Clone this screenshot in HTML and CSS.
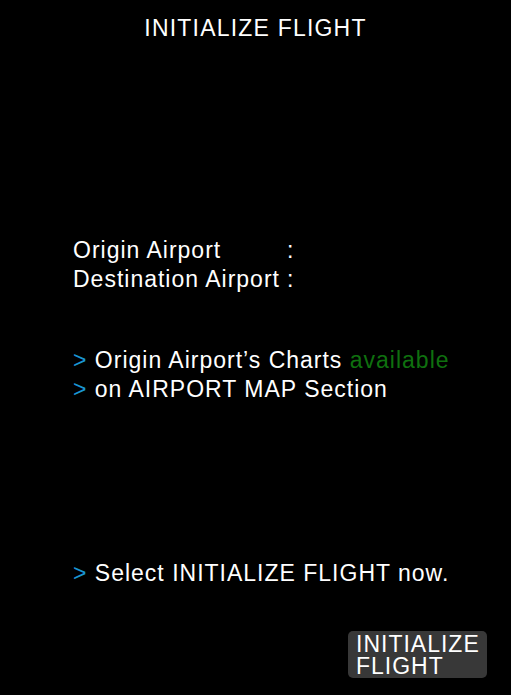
FILE: index.html
```html
<!DOCTYPE html>
<html>
<head>
<meta charset="utf-8">
<link rel="stylesheet" href="styles.css">
</head>
<body>
<div class="screen">
  <h1 class="title">INITIALIZE FLIGHT</h1>
  <div class="fields">
    <div class="field"><span class="label">Origin Airport</span><span class="colon">:</span></div>
    <div class="field"><span class="label">Destination Airport</span><span class="colon">:</span></div>
  </div>
  <div class="notes">
    <div class="line"><span class="arrow">&gt;</span> Origin Airport’s Charts <span class="ok">available</span></div>
    <div class="line"><span class="arrow">&gt;</span> on AIRPORT MAP Section</div>
  </div>
  <div class="prompt">
    <div class="line"><span class="arrow">&gt;</span> Select INITIALIZE FLIGHT now.</div>
  </div>
  <div class="actions">
    <button class="btn">INITIALIZE<br>FLIGHT</button>
  </div>
</div>
</body>
</html>
```
FILE: styles.css
```css
html, body {
  margin: 0;
  padding: 0;
  background: #000;
}
.screen {
  width: 511px;
  height: 695px;
  display: flex;
  flex-direction: column;
  color: #fff;
  font-family: "Liberation Sans", Arial, sans-serif;
  font-size: 23px;
  letter-spacing: 1px;
  box-sizing: border-box;
}
.title {
  margin: 15px 0 0 0;
  font-size: 23px;
  font-weight: normal;
  text-align: center;
  line-height: 26px;
  letter-spacing: 1.2px;
}
.fields {
  margin: 195px 0 0 73px;
}
.field {
  display: flex;
  line-height: 29px;
}
.label {
  width: 214px;
}
.notes {
  margin: 52px 0 0 73px;
  line-height: 29px;
}
.arrow {
  color: #1a95d2;
}
.ok {
  color: #0f700f;
}
.prompt {
  margin: 155px 0 0 73px;
  line-height: 29px;
}
.actions {
  display: flex;
  justify-content: flex-end;
  padding-right: 24px;
  margin-top: 43px;
}
.btn {
  width: 139px;
  height: 47px;
  background: #383838;
  color: #fff;
  border: none;
  border-radius: 5px;
  font-family: "Liberation Sans", Arial, sans-serif;
  font-size: 23px;
  letter-spacing: 1px;
  line-height: 22px;
  text-align: left;
  padding: 2px 0 0 8px;
  display: flex;
  flex-direction: column;
  justify-content: flex-start;
}
```
